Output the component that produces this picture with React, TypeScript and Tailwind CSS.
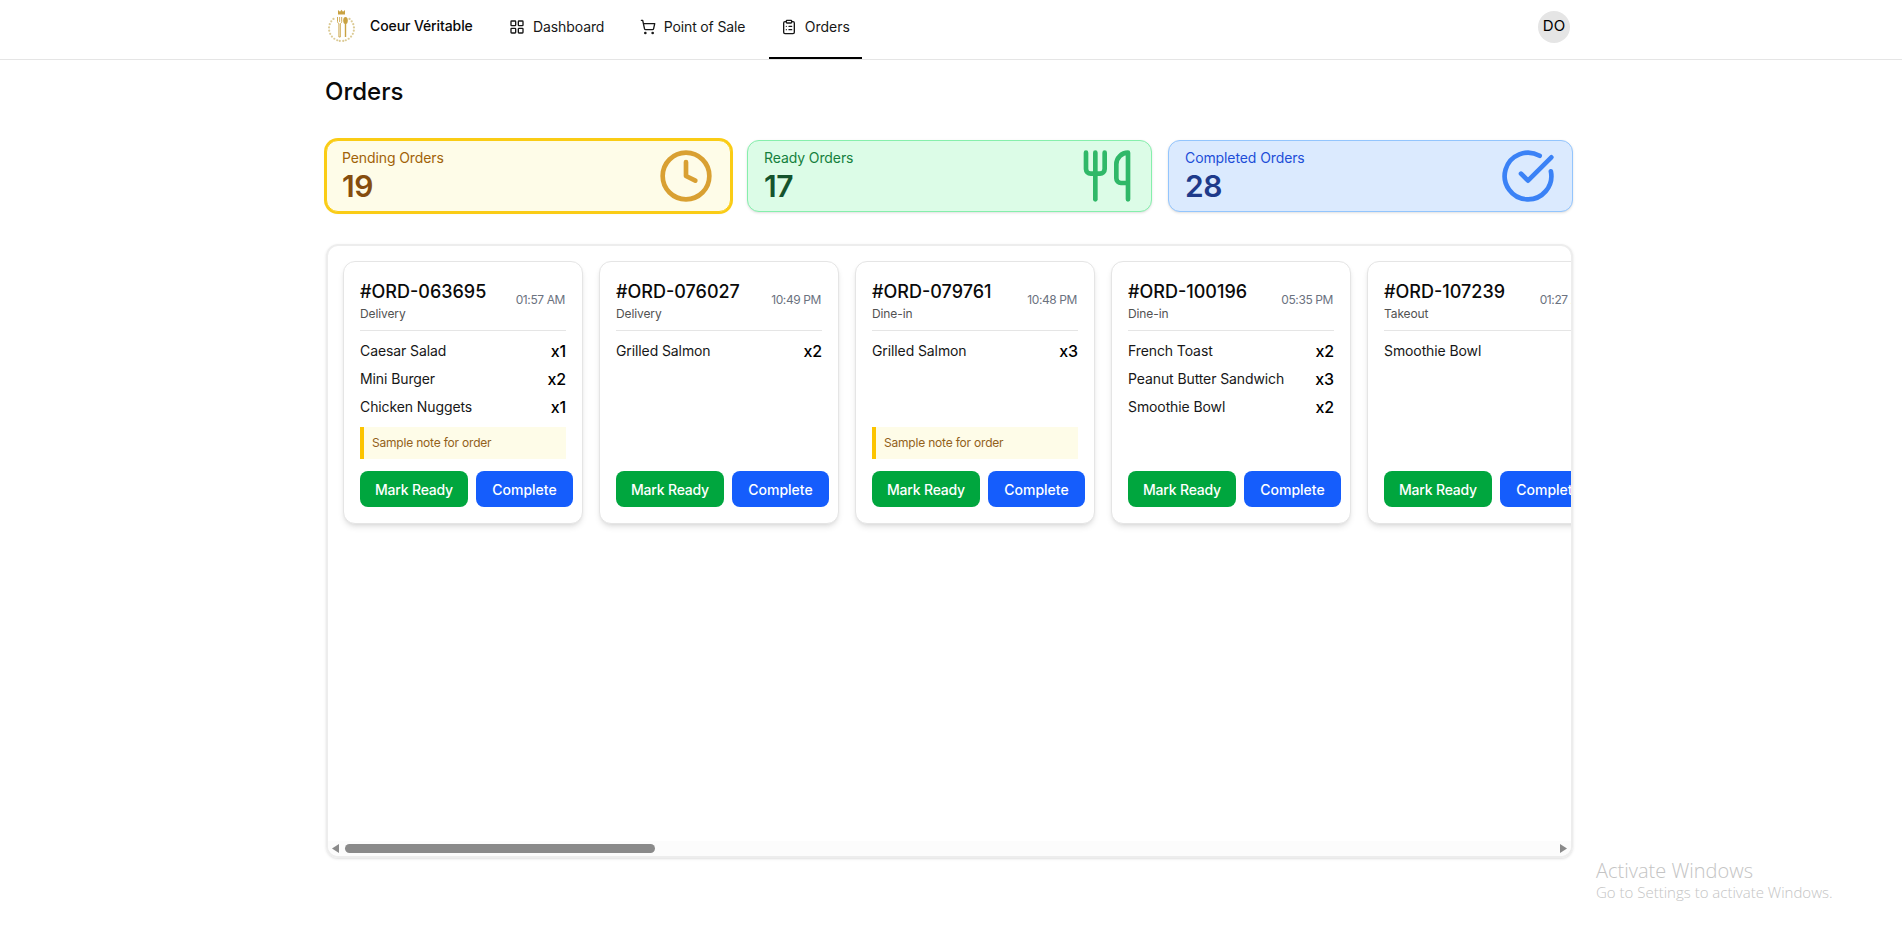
import { CircleCheckBig, ClipboardList, Clock, LayoutGrid, ShoppingCart, Utensils } from "lucide-react"

const orders = [
  { id: "#ORD-063695", time: "01:57 AM", type: "Delivery", items: [["Caesar Salad", 1], ["Mini Burger", 2], ["Chicken Nuggets", 1]], note: true },
  { id: "#ORD-076027", time: "10:49 PM", type: "Delivery", items: [["Grilled Salmon", 2]], note: false },
  { id: "#ORD-079761", time: "10:48 PM", type: "Dine-in", items: [["Grilled Salmon", 3]], note: true },
  { id: "#ORD-100196", time: "05:35 PM", type: "Dine-in", items: [["French Toast", 2], ["Peanut Butter Sandwich", 3], ["Smoothie Bowl", 2]], note: false },
  { id: "#ORD-107239", time: "01:27 AM", type: "Takeout", items: [["Smoothie Bowl", 2]], note: false },
]

const Logo = () => {
  const leaves = [-140, -125, -110, -95, -80, -65, -50, -35, -20, -8, 8, 20, 35, 50, 65, 80, 95, 110, 125, 140]
  return (
    <svg width="32" height="34" viewBox="0 0 32 34" fill="none">
      {leaves.map((a) => {
        const r = (a * Math.PI) / 180
        return <circle key={a} cx={15.500 + 12.500 * Math.sin(r)} cy={19.500 + 12.500 * Math.cos(r)} r="1.100" fill="#dccb96" />
      })}
      <path d="M12 5.500V1l2 1.800L15.500 .8 17 2.800 19 1v4.500z" fill="#c9a243" />
      <path d="M11.500 8v4.500c0 1.200.8 1.800 1.400 2.100V28h1.400V14.600c.6-.3 1.400-.9 1.400-2.100V8" stroke="#c9a243" strokeWidth="0.9" />
      <path d="M13.600 8v5" stroke="#c9a243" strokeWidth="0.8" />
      <ellipse cx="19.500" cy="11.500" rx="2.300" ry="3.500" fill="#c9a243" />
      <rect x="18.800" y="14" width="1.400" height="14" fill="#c9a243" />
    </svg>
  )
}

const Nav = () => (
  <nav className="border-b border-[#e5e5e5] h-[60px] pr-[4px]">
    <div className="w-[1248px] mx-auto h-full flex items-stretch justify-between">
      <div className="flex items-stretch">
        <div className="flex items-center w-[172px]">
          <div className="ml-[1px] mt-[-7px]"><Logo /></div>
          <span className="ml-[12px] mt-[-8px] text-sm font-medium text-[#0a0a0a] tracking-[-0.1px]">Coeur Véritable</span>
        </div>
        <div className="flex gap-[11.5px]">
          <a className="flex items-center gap-2 px-3 pb-[5px] text-sm text-[#171717] tracking-[-0.1px]"><LayoutGrid size={16} />Dashboard</a>
          <a className="flex items-center gap-2 px-3 pb-[5px] text-sm text-[#171717] tracking-[-0.15px]"><ShoppingCart size={16} />Point of Sale</a>
          <a className="flex items-center gap-2 px-3 pb-[3px] text-sm text-[#171717] border-b-2 border-black"><ClipboardList size={16} />Orders</a>
        </div>
      </div>
      <div className="flex items-center pr-[3px] pb-[6px]">
        <div className="w-8 h-8 rounded-full bg-[#e5e5e5] flex items-center justify-center text-[15px] text-black">DO</div>
      </div>
    </div>
  </nav>
)

const StatCard = ({ label, value, icon, box, labelColor, valueColor }: { label: string; value: number; icon: React.ReactNode; box: string; labelColor: string; valueColor: string }) => (
  <div className={`h-[72px] rounded-xl border pr-4 flex items-center justify-between shadow-sm ${box}`}>
    <div>
      <div className={`text-sm leading-5 tracking-[-0.1px] ${labelColor}`}>{label}</div>
      <div className={`text-3xl leading-9 font-semibold tracking-[-0.5px] ${valueColor}`}>{value}</div>
    </div>
    {icon}
  </div>
)

const OrderCard = ({ order }: { order: (typeof orders)[number] }) => (
  <div className="w-[240px] shrink-0 h-[263px] rounded-xl border border-[#e5e5e5] bg-white shadow-md p-4 flex flex-col">
    <div className="flex items-start justify-between border-b border-[#e5e5e5] h-[53px] shrink-0">
      <div>
        <div className="text-lg leading-7 font-medium text-[#0a0a0a]">{order.id}</div>
        <div className="text-xs leading-4 text-[#525252] tracking-[-0.1px]">{order.type}</div>
      </div>
      <div className="text-xs leading-4 text-[#6b7280] whitespace-nowrap mt-[14px] mr-[1px] tracking-[-0.4px]">{order.time}</div>
    </div>
    <div className="flex-1 flex flex-col gap-2 pt-[10px]">
      {order.items.map(([name, qty]) => (
        <div key={name as string} className="flex justify-between items-center h-5 text-sm text-[#171717] tracking-[-0.1px]">
          <span>{name}</span>
          <span className="text-base font-medium text-black">x{qty}</span>
        </div>
      ))}
    </div>
    {order.note && (
      <div className="h-8 mb-3 shrink-0 border-l-4 border-[#fcc400] bg-[#fefce8] pl-2 flex items-center text-xs text-[#92611a] tracking-[-0.2px]">Sample note for order</div>
    )}
    <div className="flex gap-2 w-[213px] shrink-0">
      <button className="w-[108px] h-9 pt-[1px] rounded-lg bg-[#00a63e] text-white text-sm font-medium tracking-[-0.2px]">Mark Ready</button>
      <button className="w-[97px] h-9 pt-[1px] rounded-lg bg-[#155dfc] text-white text-sm font-medium">Complete</button>
    </div>
  </div>
)

const App = () => {
  return (
    <div className="relative h-[949px] bg-white overflow-hidden font-['Inter',sans-serif]">
      <Nav />
      <main className="w-[1247px] ml-[326px]">
        <h1 className="text-2xl font-medium text-[#0a0a0a] leading-8 mt-[16px] ml-[-1px]">Orders</h1>
        <div className="grid grid-cols-3 gap-4 mt-[32px]">
          <StatCard
            label="Pending Orders"
            value={19}
            box="pl-[15px] bg-[#fefce8] border-[#facc15] ring-2 ring-[#facc15]"
            labelColor="text-[#a16207]"
            valueColor="text-[#854d0e]"
            icon={<Clock size={56} className="text-[#d9a032]" />}
          />
          <StatCard
            label="Ready Orders"
            value={17}
            box="pl-4 bg-[#dcfce7] border-[#86efac]"
            labelColor="text-[#15803d]"
            valueColor="text-[#14532d]"
            icon={<Utensils size={56} className="text-[#30b868]" />}
          />
          <StatCard
            label="Completed Orders"
            value={28}
            box="pl-4 bg-[#dbeafe] border-[#93c5fd]"
            labelColor="text-[#1d4ed8]"
            valueColor="text-[#1e3a8a]"
            icon={<CircleCheckBig size={56} className="text-[#3b82f6]" />}
          />
        </div>
        <div className="mt-[32px] h-[614px] rounded-xl border-2 border-[#ededed] shadow-sm overflow-hidden flex flex-col">
          <div className="flex-1 flex gap-4 pl-[15px] pt-[15px] overflow-hidden">
            {orders.map((o) => (
              <OrderCard key={o.id} order={o} />
            ))}
          </div>
          <div className="h-[15px] bg-[#fcfcfc] flex items-center justify-between px-[4px]">
            <div className="flex items-center flex-1">
              <svg width="8" height="9" viewBox="0 0 8 9"><path d="M7 0v9L0 4.500z" fill="#8a8a8a" /></svg>
              <div className="ml-[5px] w-[310px] h-[9px] rounded-full bg-[#8a8a8a]" />
            </div>
            <svg width="8" height="9" viewBox="0 0 8 9"><path d="M1 0v9l7-4.500z" fill="#8a8a8a" /></svg>
          </div>
        </div>
      </main>
      <div className="absolute left-[1596px] top-[860px] text-[#c4c4c4] font-['Open_Sans',sans-serif] font-light">
        <div className="text-xl leading-[22px]">Activate Windows</div>
        <div className="text-[15px] leading-5">Go to Settings to activate Windows.</div>
      </div>
    </div>
  )
}

export default App
